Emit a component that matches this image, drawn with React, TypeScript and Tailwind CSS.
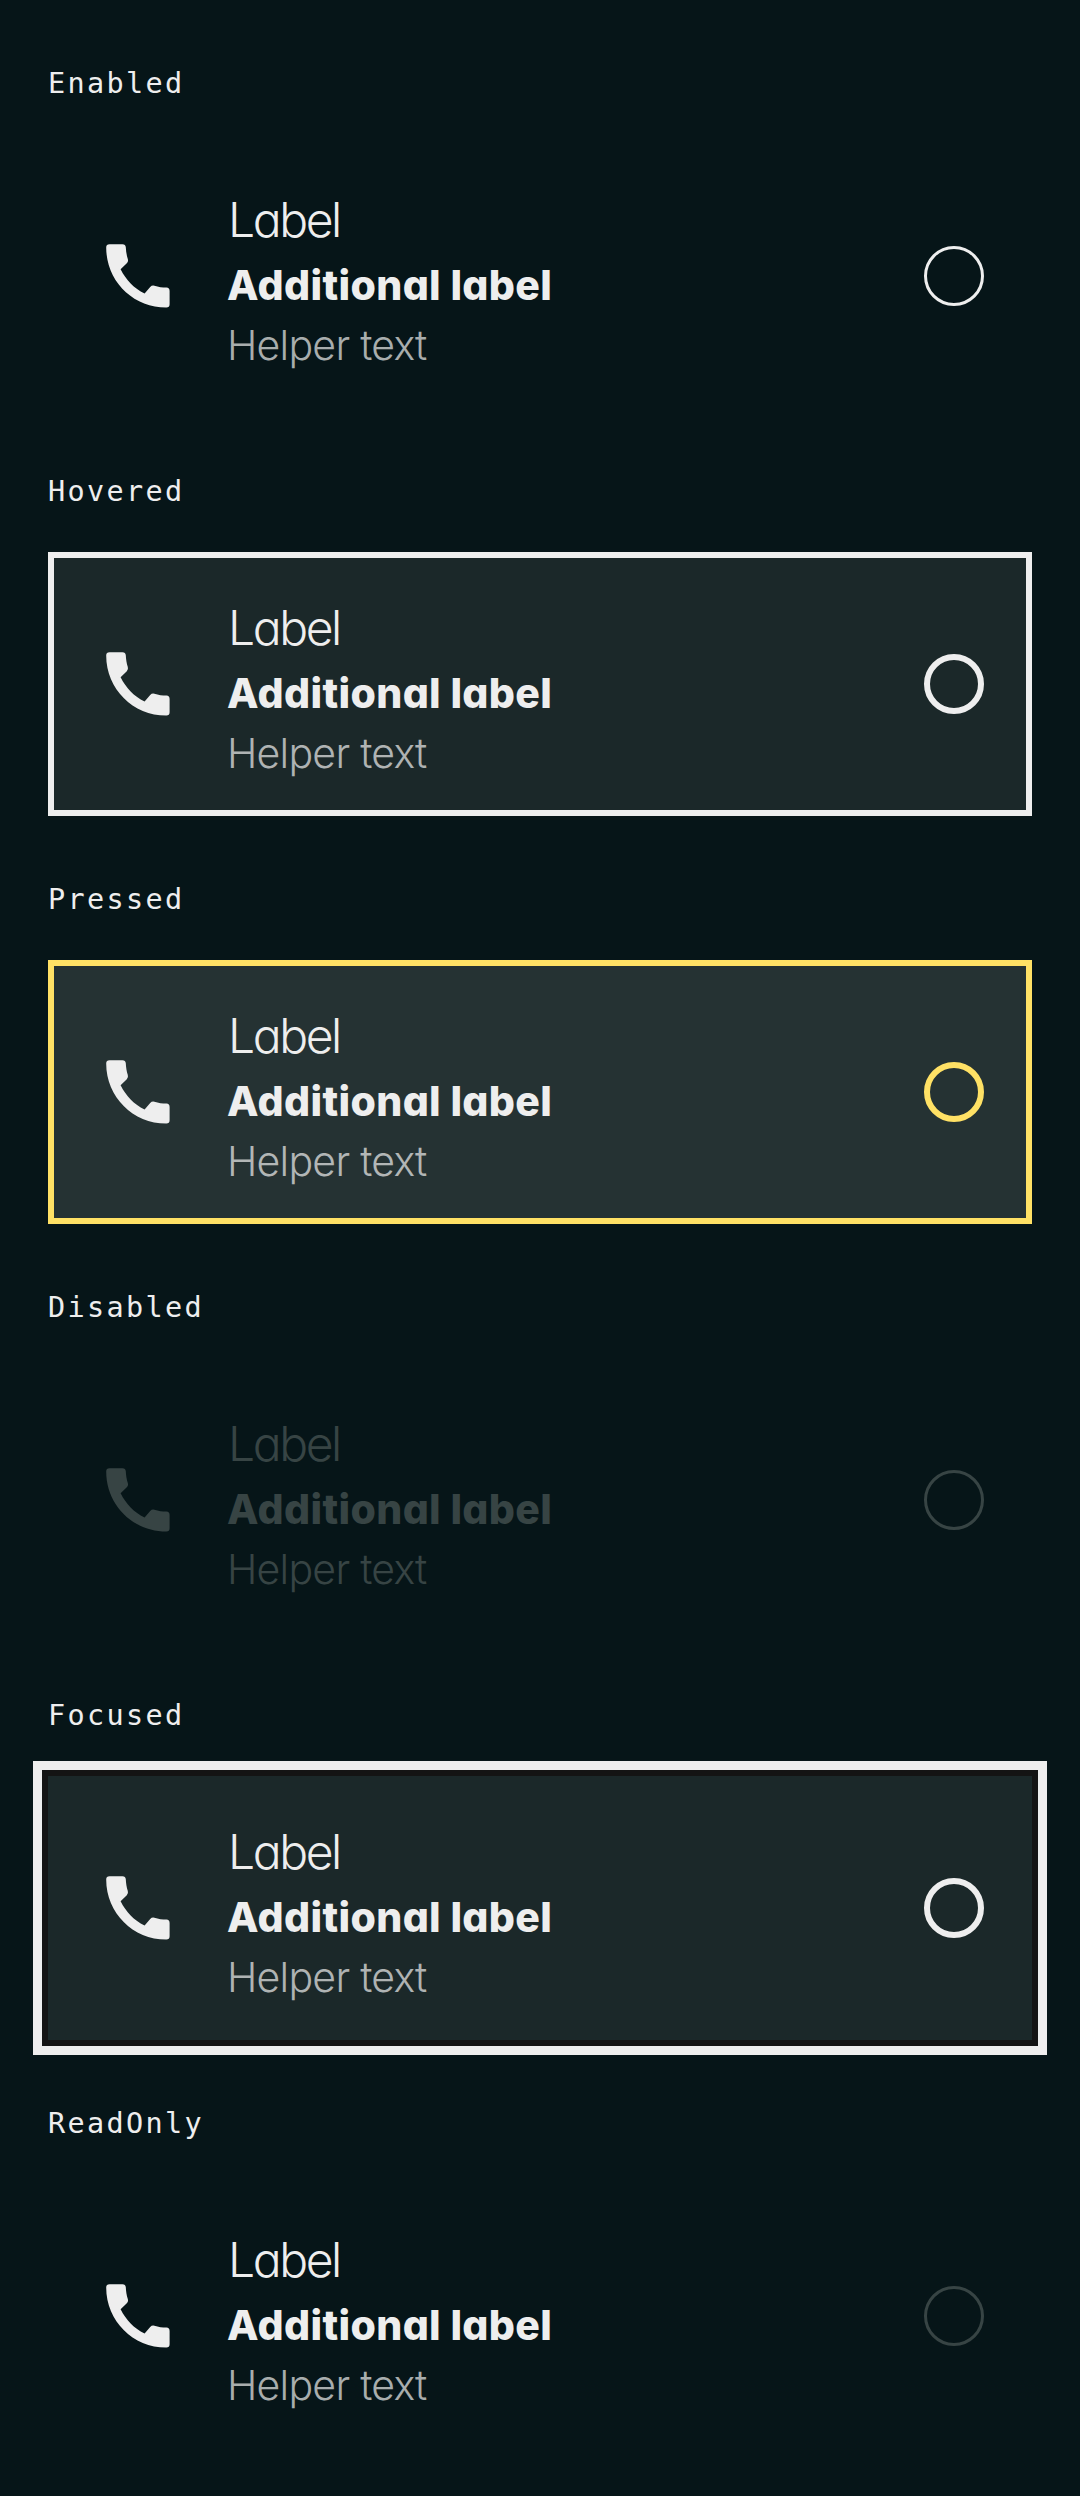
import React from "react";

type State = {
  name: string;
  card: string;
  radio: string;
  main: string;
  helper: string;
};

const states: State[] = [
  { name: "Enabled", card: "", radio: "border-3 border-[#eeeeee]", main: "text-[#eeeeee]", helper: "text-[#a8adad]" },
  { name: "Hovered", card: "bg-[#1b2829] inset-ring-6 inset-ring-[#eeeeee]", radio: "border-6 border-[#eeeeee]", main: "text-[#eeeeee]", helper: "text-[#afb3b3]" },
  { name: "Pressed", card: "bg-[#253233] inset-ring-6 inset-ring-[#ffe165]", radio: "border-6 border-[#ffe165]", main: "text-[#eeeeee]", helper: "text-[#b2b6b6]" },
  { name: "Disabled", card: "", radio: "border-3 border-[#374444]", main: "text-[#374444]", helper: "text-[#374444]" },
  { name: "Focused", card: "bg-[#1b2829] shadow-[0_0_0_6px_#141414,0_0_0_15px_#eeeeee]", radio: "border-6 border-[#eeeeee]", main: "text-[#eeeeee]", helper: "text-[#afb3b3]" },
  { name: "ReadOnly", card: "", radio: "border-3 border-[#374444]", main: "text-[#eeeeee]", helper: "text-[#a8adad]" },
];

function PhoneIcon() {
  return (
    <svg viewBox="0 0 64 64" className="size-16 shrink-0" fill="currentColor">
      <path d="M3.5 0.200H16.500Q19.500 0.200 19.800 3.200C20 7.500 20.600 11.200 21.800 15Q22.600 17.400 20.800 19.200L14.600 25.200C20 36 28 44.300 38.600 49.500L44.200 43Q46 41 48.400 41.700C52.500 43 56.300 43.500 60.500 43.600Q63.600 43.800 63.600 47V60.300Q63.600 63.600 60.300 63.600C27 63.600 0.200 37 0.200 3.500Q0.200 0.200 3.500 0.200Z" />
    </svg>
  );
}

function Section({ state }: { state: State }) {
  return (
    <section className="h-[408px] px-12">
      <h2 className="h-36 pt-[60px] font-['DejaVu_Sans_Mono',monospace] text-[28.5px] leading-[48px] tracking-[2.35px] text-[#eeeeee]">{state.name}</h2>
      <div className={`flex h-[264px] items-center pl-[58px] pr-12 ${state.card} ${state.main}`}>
        <PhoneIcon />
        <div className="ml-[58px] flex-1 pt-[6px] font-['Inter',sans-serif] [font-feature-settings:'cv11']">
          <p className="text-[48px] leading-[71px] font-light tracking-[-2.4px]">Label</p>
          <p className="-ml-px text-[41px] leading-[60px] font-extrabold tracking-[0.35px]">Additional label</p>
          <p className={`-ml-px text-[41px] leading-[60px] font-light tracking-[-0.75px] ${state.helper}`}>Helper text</p>
        </div>
        <span className={`size-[60px] shrink-0 rounded-full ${state.radio}`} />
      </div>
    </section>
  );
}

export default function App() {
  return (
    <main className="h-[2496px] w-[1080px] bg-[#061518]">
      {states.map((state) => (
        <Section key={state.name} state={state} />
      ))}
    </main>
  );
}
